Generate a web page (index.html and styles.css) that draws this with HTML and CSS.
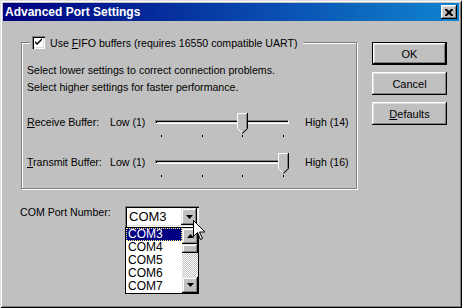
FILE: index.html
```html
<!doctype html>
<html>
<head>
    <meta charset="utf-8">
    <title>Advanced Port Settings</title>
    <link rel="stylesheet" href="styles.css">
</head>
<body>
<div class="Window">
    <div class="TitleBar">
        <span class="TitleBar_text">Advanced Port Settings</span>
        <span class="TitleBar_close">
            <svg width="8" height="7" viewBox="0 0 8 7"><path d="M0 0h2l2 2 2-2h2v1l-2.5 2.5 2.5 2.5v1h-2l-2-2-2 2h-2v-1l2.5-2.5-2.5-2.5z"/></svg>
        </span>
    </div>
    <div class="Content">
        <div class="Main">
            <fieldset class="Group">
                <legend class="Group_legend">
                    <span class="Check">
                        <svg width="9" height="9" viewBox="0 0 9 9"><path d="M1 3v2l2 2 5-5v-2l-5 5z"/></svg>
                    </span>
                    <span>Use <u>F</u>IFO buffers (requires 16550 compatible UART)</span>
                </legend>
                <p class="Intro">Select lower settings to correct connection problems.<br>Select higher settings for faster performance.</p>
                <div class="SliderRow">
                    <span class="SliderRow_label"><u>R</u>eceive Buffer:</span>
                    <span class="SliderRow_low">Low (1)</span>
                    <div class="Slider">
                        <div class="Slider_track"></div>
                        <svg class="Slider_thumb" style="left: 82px" width="11" height="21" viewBox="0 0 11 21">
                            <path d="M0 0h10v15l-5 5-5-5z" fill="#c0c0c0"/>
                            <path d="M0.5 15.5v-15h9" stroke="#fff" fill="none"/>
                            <path d="M0.5 15.5l4.5 4.5" stroke="#fff" fill="none"/>
                            <path d="M9.5 1v14.5l-4.5 4.5" stroke="#808080" fill="none"/>
                            <path d="M10.5 0v15.7l-5 5" stroke="#000" fill="none"/>
                        </svg>
                        <div class="Slider_ticks"><i></i><i></i><i></i><i></i></div>
                    </div>
                    <span class="SliderRow_high">High (14)</span>
                </div>
                <div class="SliderRow">
                    <span class="SliderRow_label"><u>T</u>ransmit Buffer:</span>
                    <span class="SliderRow_low">Low (1)</span>
                    <div class="Slider">
                        <div class="Slider_track"></div>
                        <svg class="Slider_thumb" style="left: 123px" width="11" height="21" viewBox="0 0 11 21">
                            <path d="M0 0h10v15l-5 5-5-5z" fill="#c0c0c0"/>
                            <path d="M0.5 15.5v-15h9" stroke="#fff" fill="none"/>
                            <path d="M0.5 15.5l4.5 4.5" stroke="#fff" fill="none"/>
                            <path d="M9.5 1v14.5l-4.5 4.5" stroke="#808080" fill="none"/>
                            <path d="M10.5 0v15.7l-5 5" stroke="#000" fill="none"/>
                        </svg>
                        <div class="Slider_ticks"><i></i><i></i><i></i><i></i></div>
                    </div>
                    <span class="SliderRow_high">High (16)</span>
                </div>
            </fieldset>
            <div class="PortRow">
                <span class="PortRow_label">COM Port Number:</span>
                <div class="Combo">
                    <span class="Combo_value">COM3</span>
                    <span class="Combo_button">
                        <svg width="7" height="4" viewBox="0 0 7 4"><path d="M0 0h7l-3.5 4z"/></svg>
                    </span>
                    <div class="DropList">
                        <ul class="DropList_items">
                            <li class="_selected">COM3</li>
                            <li>COM4</li>
                            <li>COM5</li>
                            <li>COM6</li>
                            <li>COM7</li>
                        </ul>
                        <div class="Scroll">
                            <span class="Scroll_button">
                                <svg width="7" height="4" viewBox="0 0 7 4"><path d="M0 4h7l-3.5-4z"/></svg>
                            </span>
                            <span class="Scroll_thumb"></span>
                            <span class="Scroll_track"></span>
                            <span class="Scroll_button">
                                <svg width="7" height="4" viewBox="0 0 7 4"><path d="M0 0h7l-3.5 4z"/></svg>
                            </span>
                        </div>
                    </div>
                </div>
            </div>
        </div>
        <div class="Buttons">
            <button class="Button _default">OK</button>
            <button class="Button">Cancel</button>
            <button class="Button"><u>D</u>efaults</button>
        </div>
    </div>
    <svg class="Cursor" width="12" height="21" viewBox="0 0 12 21">
        <path d="M0.5 0.5v16l4-4 3 7 2-1-3-6.5h5.5z" fill="#fff" stroke="#000"/>
    </svg>
</div>
</body>
</html>
```

FILE: styles.css
```css
body {
    margin: 0;
    font-family: 'Liberation Sans', Arial, sans-serif;
    font-size: 10.6px;
    color: #000;
}
.Window {
    position: relative;
    width: 462px;
    height: 308px;
    box-sizing: border-box;
    padding: 3px;
    background: #c0c0c0;
    box-shadow: inset 1px 1px #dfdfdf, inset -1px -1px #000, inset 2px 2px #fff, inset -2px -2px #808080;
}
.TitleBar {
    height: 18px;
    display: flex;
    align-items: center;
    justify-content: space-between;
    padding: 0 2px;
    background: linear-gradient(to right, #000080, #1084d0);
    color: #fff;
}
.TitleBar_text {
    font-weight: bold;
    font-size: 12px;
}
.TitleBar_close {
    width: 16px;
    height: 14px;
    display: flex;
    align-items: center;
    justify-content: center;
    background: #c0c0c0;
    box-shadow: inset -1px -1px #000, inset 1px 1px #fff, inset -2px -2px #808080, inset 2px 2px #dfdfdf;
}
.Content {
    display: flex;
    padding: 15px 0 0 17px;
}
.Main {
    width: 338px;
}
.Group {
    margin: 0 0 0 1px;
    width: 336px;
    box-sizing: border-box;
    padding: 13px 5px 11px;
    border: 1px solid #808080;
    box-shadow: 1px 1px #fff, inset 1px 1px #fff;
    min-inline-size: 0;
}
.Group_legend {
    display: flex;
    align-items: center;
    gap: 5px;
    margin-left: 3px;
    padding: 0 5px 0 2px;
    height: 13px;
    background: #c0c0c0;
}
.Check {
    width: 13px;
    height: 13px;
    box-sizing: border-box;
    display: flex;
    align-items: center;
    justify-content: center;
    background: #fff;
    box-shadow: inset 1px 1px #808080, inset 2px 2px #000, inset -1px -1px #fff, inset -2px -2px #dfdfdf;
}
.Intro {
    margin: 0;
    line-height: 17px;
}
.SliderRow {
    display: flex;
    align-items: flex-start;
    height: 24px;
    margin-top: 17px;
}
.SliderRow + .SliderRow {
    margin-top: 16px;
}
.SliderRow_label, .SliderRow_low, .SliderRow_high {
    line-height: 13px;
    margin-top: 3px;
}
.SliderRow_label {
    width: 83px;
}
.SliderRow_low {
    width: 45px;
}
.SliderRow_high {
    margin-left: 16px;
}
.Slider {
    position: relative;
    width: 134px;
    height: 24px;
}
.Slider_track {
    margin-top: 7px;
    height: 4px;
    box-sizing: border-box;
    border: 1px solid;
    border-color: #808080 #fff #fff #808080;
    box-shadow: inset 1px 1px #000, inset -1px -1px #dfdfdf;
}
.Slider_thumb {
    position: absolute;
    top: 0;
}
.Slider_ticks {
    display: flex;
    justify-content: space-between;
    padding: 0 5px 0 6px;
    margin-top: 11px;
}
.Slider_ticks i {
    width: 1px;
    height: 2px;
    background: #000;
}
.PortRow {
    display: flex;
    align-items: flex-start;
    margin-top: 17px;
}
.PortRow_label {
    width: 105px;
    line-height: 13px;
}
.Combo {
    position: relative;
    width: 74px;
    height: 21px;
    box-sizing: border-box;
    padding: 2px;
    display: flex;
    align-items: center;
    background: #fff;
    box-shadow: inset 1px 1px #808080, inset 2px 2px #000, inset -1px -1px #fff, inset -2px -2px #dfdfdf;
}
.Combo_value {
    flex-grow: 1;
    padding-left: 2px;
    font-size: 13px;
}
.Combo_button, .Scroll_button {
    width: 16px;
    height: 17px;
    display: flex;
    align-items: center;
    justify-content: center;
    background: #c0c0c0;
    box-shadow: inset -1px -1px #000, inset 1px 1px #dfdfdf, inset -2px -2px #808080, inset 2px 2px #fff;
}
.DropList {
    position: absolute;
    top: 21px;
    left: 0;
    width: 74px;
    height: 67px;
    box-sizing: border-box;
    border: 1px solid #000;
    background: #fff;
    display: flex;
}
.DropList_items {
    list-style: none;
    margin: 0;
    padding: 0;
    flex-grow: 1;
    font-size: 12px;
}
.DropList_items li {
    height: 13px;
    line-height: 13px;
    padding-left: 2px;
}
.DropList_items li._selected {
    background: #000080;
    color: #fff;
    outline: 1px dotted #ffff80;
    outline-offset: -1px;
}
.Scroll {
    width: 16px;
    display: flex;
    flex-direction: column;
}
.Scroll_button {
    height: 16px;
}
.Scroll_thumb {
    height: 9px;
    background: #c0c0c0;
    box-shadow: inset -1px -1px #000, inset 1px 1px #dfdfdf, inset -2px -2px #808080, inset 2px 2px #fff;
}
.Scroll_track {
    flex-grow: 1;
    background: repeating-conic-gradient(#fff 0 25%, #c0c0c0 0 50%) 0 0 / 2px 2px;
}
.Buttons {
    display: flex;
    flex-direction: column;
    gap: 7px;
    margin: 6px 0 0 14px;
}
.Button {
    width: 75px;
    height: 23px;
    padding: 0;
    border: 0;
    background: #c0c0c0;
    font: inherit;
    font-size: 11px;
    color: #000;
    box-shadow: inset -1px -1px #000, inset 1px 1px #fff, inset -2px -2px #808080, inset 2px 2px #dfdfdf;
}
.Button._default {
    box-shadow: inset 0 0 0 1px #000, inset -2px -2px #000, inset 2px 2px #fff, inset -3px -3px #808080, inset 3px 3px #dfdfdf;
}
.Cursor {
    position: absolute;
    left: 193px;
    top: 220px;
}
```
